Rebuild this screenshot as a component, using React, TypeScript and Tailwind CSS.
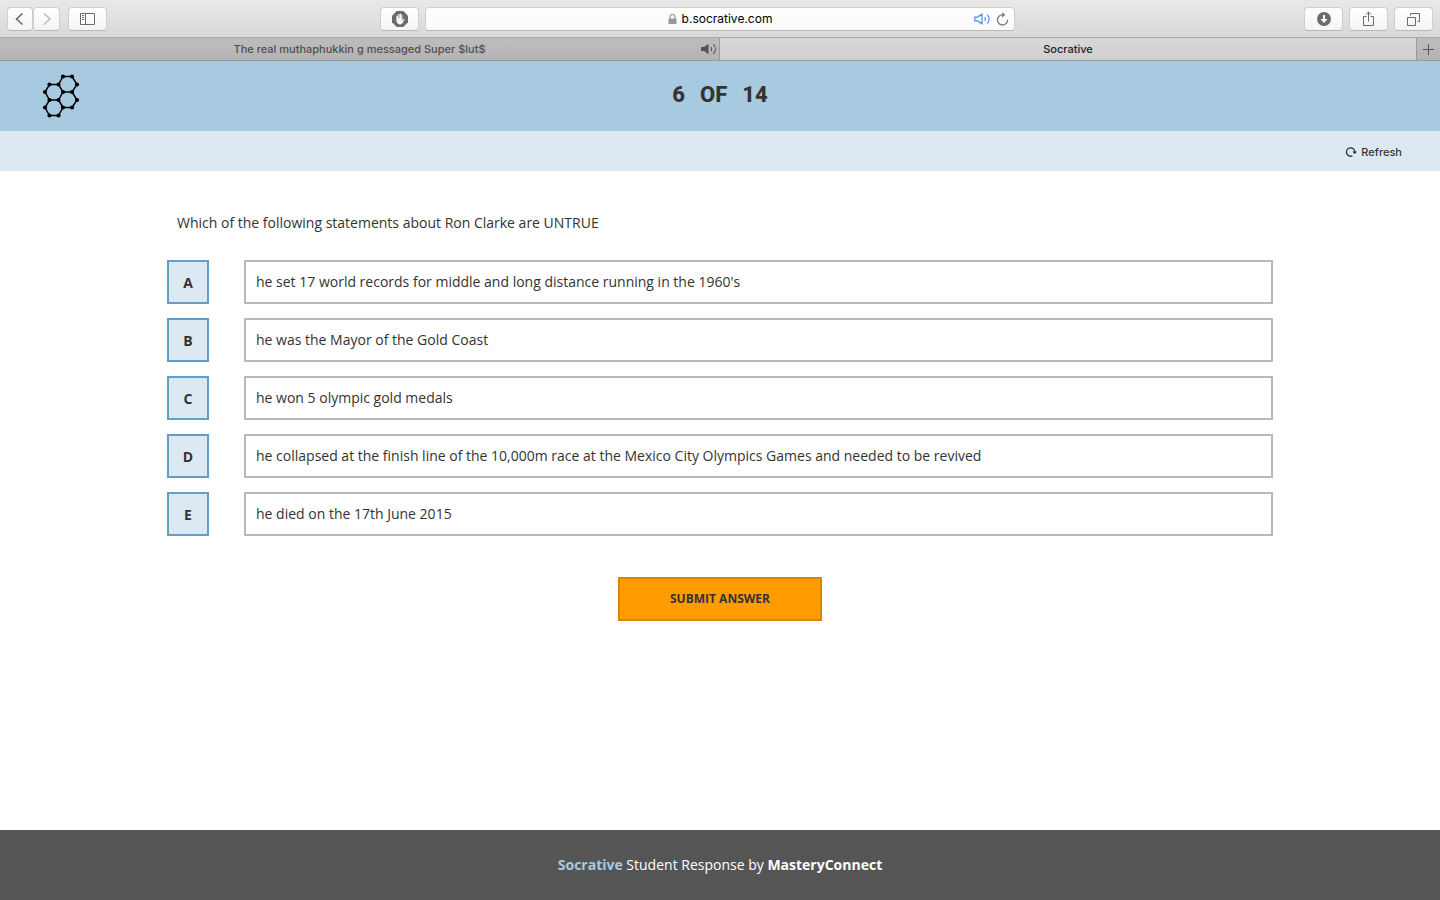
import { useState } from "react";
import type { ReactNode } from "react";

const answers = [
  { letter: "A", text: "he set 17 world records for middle and long distance running in the 1960's" },
  { letter: "B", text: "he was the Mayor of the Gold Coast" },
  { letter: "C", text: "he won 5 olympic gold medals" },
  { letter: "D", text: "he collapsed at the finish line of the 10,000m race at the Mexico City Olympics Games and needed to be revived" },
  { letter: "E", text: "he died on the 17th June 2015" },
];

const nodes: [number, number][] = [
  [21, 2.5], [30, 2.5], [35, 10.5], [30, 18], [21, 18], [16.5, 10.5], [7.5, 10.5], [3, 18],
  [7.5, 26], [16.5, 26], [35, 26], [30, 33.5], [21, 33.5], [3, 33.5], [7.5, 41.5], [16.5, 41.5],
];

function ToolbarButton({ label, width = "w-[39px]", children }: { label: string; width?: string; children: ReactNode }) {
  return (
    <button
      aria-label={label}
      className={`${width} flex h-6 items-center justify-center rounded border border-[#cfcfcf] border-b-[#b8b8b8] bg-linear-to-b from-white to-[#f4f4f4] text-[#6b6b6b]`}
    >
      {children}
    </button>
  );
}

function Toolbar() {
  return (
    <div className="flex h-[37px] items-center gap-1.5 bg-linear-to-b from-[#e9e9e9] to-[#d8d8d8] px-[7px] pt-px">
      <div className="flex flex-1 items-center justify-between">
        <div className="flex items-center gap-2">
          <div className="flex">
            <ToolbarButton label="Back" width="w-[26px]">
              <svg width="10" height="14" viewBox="0 0 10 14" fill="none" stroke="currentColor" strokeWidth="1.6"><path d="M7.5 1.5 1.5 7l6 5.5" /></svg>
            </ToolbarButton>
            <ToolbarButton label="Forward" width="w-[27px]">
              <svg width="10" height="14" viewBox="0 0 10 14" fill="none" stroke="#bdbdbd" strokeWidth="1.6"><path d="m2 1.5 6 5.5-6 5.5" /></svg>
            </ToolbarButton>
          </div>
          <ToolbarButton label="Show sidebar">
            <svg width="15" height="12" viewBox="0 0 15 12" fill="none" stroke="currentColor"><path d="M.5.5h14v11H.5zM5.5.5v11M2 2.5h2M2 4.5h2M2 6.5h2" /></svg>
          </ToolbarButton>
        </div>
        <ToolbarButton label="Content blocker">
          <svg width="16" height="16" viewBox="0 0 16 16">
            <path d="M4.7 0h6.6L16 4.7v6.6L11.3 16H4.7L0 11.3V4.7z" fill="#6b6b6b" />
            <path d="M4.4 5.2v4.3c0 2.2 1.4 3.9 3.5 3.9 1.6 0 2.5-.8 3.1-2.1l1.7-3.2c-.5-.6-1.2-.3-1.6.3l-.7 1V4.2c0-.8-1.1-.8-1.1 0v3l-.3 0V3c0-.8-1.2-.8-1.2 0v4.2h-.3V3.5c0-.8-1.2-.8-1.2 0v4H6V5.2c0-.9-1.6-.9-1.6 0z" fill="#f5f5f5" />
          </svg>
        </ToolbarButton>
      </div>
      <div className="flex h-6 w-[590px] items-center rounded border border-[#cfcfcf] border-b-[#b8b8b8] bg-linear-to-b from-white to-[#fafafa] px-1">
        <div className="w-9" />
        <div className="flex flex-1 items-center justify-center gap-[5px]">
          <svg width="9" height="11" viewBox="0 0 9 11" fill="none"><path d="M2 5V3a2.5 2.5 0 0 1 5 0v2" stroke="#999" strokeWidth="1.2" /><path d="M.5 4.5h8V10h-8z" fill="#999" /></svg>
          <input aria-label="Address" defaultValue="b.socrative.com" className="field-sizing-content bg-transparent text-[12px] leading-4 text-black outline-none" />
        </div>
        <div className="flex w-9 items-center gap-[5px]">
          <button aria-label="Mute this tab" className="text-[#4a8df0]">
            <svg width="17" height="12" viewBox="0 0 17 12" fill="none" stroke="currentColor" strokeWidth="1.2"><path d="M.8 4.1h2.7L8 1.2v9.6L3.5 7.9H.8zM10.8 4.2c.9 1.1.9 2.5 0 3.6M13.2 1.6c2.5 2.6 2.5 6.2 0 8.8" /></svg>
          </button>
          <button aria-label="Reload page" className="text-[#7b7b7b]">
            <svg width="13" height="14" viewBox="0 0 13 14" fill="none" stroke="currentColor" strokeWidth="1.3"><path d="M11.6 7.6A5.1 5.1 0 1 1 6.7 2.8" /><path d="m6 .2 3.4 2.6L6 5.4z" fill="currentColor" stroke="none" /></svg>
          </button>
        </div>
      </div>
      <div className="flex flex-1 justify-end gap-1.5">
        <ToolbarButton label="Downloads">
          <svg width="14" height="14" viewBox="0 0 14 14"><circle cx="7" cy="7" r="7" fill="currentColor" /><path d="M6 3h2v4h2.6L7 10.9 3.4 7H6z" fill="white" /></svg>
        </ToolbarButton>
        <ToolbarButton label="Share">
          <svg width="11" height="16" viewBox="0 0 11 16" fill="none" stroke="currentColor"><path d="M3.5 5.5h-3v9h10v-9h-3M5.5 10.5V1M2.9 3.6 5.5 1l2.6 2.6" /></svg>
        </ToolbarButton>
        <ToolbarButton label="Show all tabs">
          <svg width="13" height="13" viewBox="0 0 13 13" fill="none" stroke="currentColor"><path d="M.5 4.5h8v8h-8zM3.5 2.5v-2h9v8h-2" /></svg>
        </ToolbarButton>
      </div>
    </div>
  );
}

function TabBar() {
  return (
    <div className="flex h-6 border-y border-t-[#aaaaaa] border-b-[#999] text-[11px] font-medium">
      <div className="flex w-1/2 items-center border-r border-[#999] bg-linear-to-b from-[#bdbdbd] to-[#b3b3b3] pr-0.5 text-[#505050]">
        <div className="w-[18px]" />
        <button className="flex-1 text-center">The real muthaphukkin g messaged Super $lut$</button>
        <button aria-label="Mute tab">
          <svg width="16" height="12" viewBox="0 0 16 12" fill="none" stroke="#555"><path d="M0 4h3l4.5-3.2v10.4L3 8H0z" fill="#555" stroke="none" /><path d="M9.8 4c1 1.2 1 2.8 0 4M12.4 1.4c2.6 2.7 2.6 6.5 0 9.2" strokeWidth="1.1" /></svg>
        </button>
      </div>
      <button className="flex-1 bg-linear-to-b from-[#d8d8d8] to-[#cfcfcf] text-center text-[#222]">Socrative</button>
      <button aria-label="New tab" className="flex w-6 items-center justify-center border-l border-[#999] bg-linear-to-b from-[#bdbdbd] to-[#b3b3b3]">
        <svg width="11" height="11" viewBox="0 0 11 11" stroke="#555"><path d="M5.5 0v11M0 5.5h11" /></svg>
      </button>
    </div>
  );
}

function Logo() {
  return (
    <svg width="38" height="45" viewBox="0 0 38 45" fill="none" stroke="black" strokeWidth="1.5">
      <path d="M21 2.5h9l5 8-5 7.5h-9L16.5 10.5zM16.5 10.5h-9L3 18l4.5 8h9l4.5-8M30 18l5 8-5 7.5h-9l-4.5-7.5M7.5 26 3 33.5l4.5 8h9l4.5-8" />
      {nodes.map(([x, y]) => (
        <circle key={`${x}-${y}`} cx={x} cy={y} r="2.1" fill="black" stroke="none" />
      ))}
    </svg>
  );
}

export default function App() {
  const [selected, setSelected] = useState<string | null>(null);

  return (
    <div className="flex min-h-screen flex-col bg-white font-['Open_Sans',sans-serif] text-[14px] text-[#333]">
      <div className="font-['Inter',sans-serif]">
        <Toolbar />
        <TabBar />
      </div>
      <header className="grid h-[70px] grid-cols-[1fr_auto_1fr] items-center bg-[#a8cae0] px-[42px]">
        <a href="#home" aria-label="Socrative home" className="w-fit">
          <Logo />
        </a>
        <h1 className="flex gap-[15px] pb-0.5 font-['Roboto',sans-serif] text-[22px] leading-8 font-extrabold">
          <span>6</span> <span>OF</span> <span>14</span>
        </h1>
      </header>
      <div className="flex h-10 items-center justify-end bg-[#dde9f2] px-[38px] pt-0.5">
        <button className="flex items-center gap-1 font-['Inter',sans-serif] text-[11px] leading-4 font-medium">
          <svg width="12" height="12" viewBox="0 0 12 12" fill="none" stroke="currentColor" strokeWidth="1.3"><path d="M7.4 9.8A4.2 4.2 0 1 1 9.8 6" /><path d="M7.4 5.4h4.6L9.7 8.2z" fill="currentColor" stroke="none" /></svg>
          Refresh
        </button>
      </div>
      <main className="mx-auto w-full max-w-[1106px] flex-1 pt-10">
        <h2 className="px-2.5 leading-6">Which of the following statements about Ron Clarke are UNTRUE</h2>
        <div className="mt-[25px] flex flex-col gap-3.5">
          {answers.map(({ letter, text }) => (
            <div key={letter} className="flex gap-[35px]">
              <button
                id={`answer-${letter}`}
                aria-pressed={selected === letter}
                onClick={() => setSelected(letter)}
                className="h-11 w-[42px] border-2 border-[#629fc8] bg-[#dde9f2] font-bold"
              >
                {letter}
              </button>
              <label htmlFor={`answer-${letter}`} className="flex flex-1 items-center border-2 border-[#b9b9b9] px-2.5 pb-px">
                {text}
              </label>
            </div>
          ))}
        </div>
        <div className="mt-[41px] flex justify-center">
          <button className="h-11 w-[204px] border-2 border-[#dc8500] bg-[#ff9d00] text-[12px] font-bold">SUBMIT ANSWER</button>
        </div>
      </main>
      <footer className="flex h-[70px] items-center justify-center bg-[#555] pb-0.5 text-white">
        <p>
          <a href="#socrative" className="font-bold text-[#a8cae0]">Socrative</a> Student Response by{" "}
          <a href="#masteryconnect" className="font-bold">MasteryConnect</a>
        </p>
      </footer>
    </div>
  );
}
